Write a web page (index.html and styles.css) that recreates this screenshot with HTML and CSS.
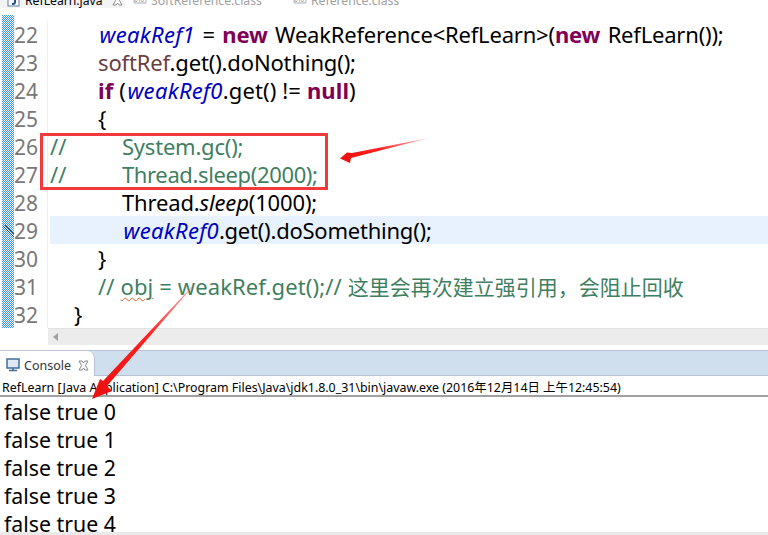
FILE: index.html
```html
<!DOCTYPE html>
<html lang="zh">
<head>
<meta charset="utf-8">
<title>RefLearn</title>
<link rel="stylesheet" href="styles.css">
</head>
<body>
<div class="tabs">
  <div class="tab active">
    <svg class="ticon" width="14" height="14" viewBox="0 0 14 14"><rect x="1" y="-4" width="11" height="16" fill="#fff" stroke="#5a7ba8"/><path d="M8 -2V8Q8 10 6 10H5" fill="none" stroke="#2d4f8f" stroke-width="2"/></svg>
    <span class="tname">RefLearn.java</span>
    <svg class="tclose" width="11" height="11" viewBox="0 0 11 11"><path d="M1 1L4 1L5.500 3L7 1L10 1L7.500 5.500L10 10L7 10L5.500 8L4 10L1 10L3.500 5.500Z" fill="#fff" stroke="#8a8a8a"/></svg>
  </div>
  <div class="tab">
    <svg class="cicon" width="14" height="12" viewBox="0 0 14 12"><path d="M1 0V8H13V0" fill="none" stroke="#a8b0bc"/><text x="1.500" y="7" class="bin">010</text></svg>
    <span class="tname dim">SoftReference.class</span>
  </div>
  <div class="tab">
    <svg class="cicon" width="14" height="12" viewBox="0 0 14 12"><path d="M1 0V8H13V0" fill="none" stroke="#a8b0bc"/><text x="1.500" y="7" class="bin">010</text></svg>
    <span class="tname dim">Reference.class</span>
  </div>
</div>
<div class="editor">
  <svg class="ruler" width="12" height="313" viewBox="0 0 12 313">
    <defs><pattern id="chk" width="2" height="2" patternUnits="userSpaceOnUse"><rect width="2" height="2" fill="#fff"/><rect width="1" height="1" fill="#3f93e4"/><rect x="1" y="1" width="1" height="1" fill="#3f93e4"/></pattern></defs>
    <rect width="12" height="313" fill="url(#chk)" shape-rendering="crispEdges"/>
  </svg>
  <div class="code">
    <div class="clipline"><span class="ln"></span><span class="src"></span></div>
    <div class="line"><span class="ln">22</span><span class="src t2 sp-w"><i class="field">weakRef1</i> = <b class="kw">new</b> WeakReference&lt;RefLearn&gt;(<b class="kw">new</b> RefLearn());</span></div>
    <div class="line"><span class="ln">23</span><span class="src t2 sp-a"><span class="soft">softRef</span>.get().doNothing();</span></div>
    <div class="line"><span class="ln">24</span><span class="src t2 sp-b"><b class="kw">if</b> (<i class="field">weakRef0</i>.get() != <b class="kw">null</b>)</span></div>
    <div class="line"><span class="ln">25</span><span class="src t2">{</span></div>
    <div class="line"><span class="ln">26</span><span class="src cm cmt sp-c"><span class="slashes">//</span>System.gc();</span></div>
    <div class="line"><span class="ln">27</span><span class="src cm cmt sp-d"><span class="slashes">//</span>Thread.sleep(2000);</span></div>
    <div class="line"><span class="ln">28</span><span class="src t3 sp-a">Thread.<i>sleep</i>(1000);</span></div>
    <div class="line current"><span class="ln">29</span><span class="src t3 sp-e"><i class="field">weakRef0</i>.get().doSomething();</span></div>
    <div class="line"><span class="ln">30</span><span class="src t2">}</span></div>
    <div class="line"><span class="ln">31</span><span class="src t2 cmt sp-f">// <span class="squiggle">obj</span> = weakRef.get();// <span class="cjk">这里会再次建立强引用，会阻止回收</span></span></div>
    <div class="line"><span class="ln">32</span><span class="src t1">}</span></div>
  </div>
</div>
<div class="hscroll"><div class="hcorner"></div><span class="harrow"></span></div>
<div class="console-tabs">
  <div class="ctab">
    <svg width="14" height="14" viewBox="0 0 14 14"><rect x="1" y="1" width="12" height="9" fill="#dfe8f3" stroke="#3f6d9c" stroke-width="1.500"/><path d="M3 12.500H11M7 10V12" stroke="#3f6d9c" stroke-width="1.500"/></svg>
    <span class="ctitle">Console</span>
    <svg width="11" height="11" viewBox="0 0 11 11"><path d="M1 1L4 1L5.500 3L7 1L10 1L7.500 5.500L10 10L7 10L5.500 8L4 10L1 10L3.500 5.500Z" fill="#fff" stroke="#8a8a8a"/></svg>
  </div>
</div>
<div class="console-head">RefLearn [Java Application] C:\Program Files\Java\jdk1.8.0_31\bin\javaw.exe (2016年12月14日 上午12:45:54)</div>
<div class="output">
  <div>false true 0</div>
  <div>false true 1</div>
  <div>false true 2</div>
  <div>false true 3</div>
  <div>false true 4</div>
</div>
<div class="footer"></div>
<div class="redbox"></div>
<svg class="arrows" width="768" height="535" viewBox="0 0 768 535">
  <defs>
    <linearGradient id="a1" x1="429" y1="138" x2="345" y2="156" gradientUnits="userSpaceOnUse"><stop offset="0" stop-color="#f66" stop-opacity="0.500"/><stop offset="0.600" stop-color="#f22"/><stop offset="1" stop-color="#ee1111"/></linearGradient>
    <linearGradient id="a2" x1="200" y1="278" x2="100" y2="390" gradientUnits="userSpaceOnUse"><stop offset="0" stop-color="#f66" stop-opacity="0.500"/><stop offset="0.500" stop-color="#f22"/><stop offset="1" stop-color="#ee1111"/></linearGradient>
  </defs>
  <path d="M3 226L14 237M5 225L14 234" stroke="#2a3f5a" stroke-width="1" fill="none"/>
  <path d="M429 138L352 153L347 152.500L340 158.500L350 163L351 158Z" fill="url(#a1)"/>
  <path d="M200 278L103 381L100 379L92 399L112 391L107 386Z" fill="url(#a2)"/>
</svg>
</body>
</html>
```
FILE: styles.css
```css
html, body { margin: 0; padding: 0; }
body {
  position: relative;
  width: 768px;
  height: 535px;
  overflow: hidden;
  background: #fff;
  font-family: "Noto Sans", "Noto Sans CJK SC", sans-serif;
  color: #000;
}
.tabs {
  height: 14px;
  display: flex;
  overflow: hidden;
  font-size: 12.200px;
  line-height: 14px;
  background: #fff;
}
.tab {
  display: flex;
  align-items: flex-start;
  gap: 4px;
  height: 14px;
  margin-top: -6px;
}
.tab.active { width: 125px; padding-left: 7px; box-sizing: border-box; background: #f4f4f4; }
.tab:nth-child(2) { width: 160px; padding-left: 8px; box-sizing: border-box; }
.tab:nth-child(3) { padding-left: 8px; }
.tname { line-height: 14px; white-space: nowrap; }
.dim { color: #a0a0a0; }
.ticon { flex: none; }
.tclose { margin: 1px 0 0 5px; flex: none; }
.cicon { margin-top: 1px; flex: none; }
.bin { font-size: 5.500px; fill: #777; }
.editor {
  height: 314px;
  display: flex;
  overflow: hidden;
}
.ruler {
  margin: 1px 0 0 2px;
  flex: none;
}
.code { flex: 1; position: relative; }
.clipline { height: 6px; }
.line {
  height: 28px;
  display: flex;
  font-size: 22px;
  line-height: 28px;
  white-space: pre;
}
.ln {
  width: 34px;
  box-sizing: border-box;
  flex: none;
  font-size: 21px;
  line-height: 30px;
  letter-spacing: 0;
  color: #787878;
  border-right: 1px solid #f0f0f0;
  margin-right: 2px;
}
.src { flex: 1; }
.t1 { padding-left: 24px; }
.t2 { padding-left: 48px; }
.t3 { padding-left: 72px; }
.cm { display: flex; }
.slashes { width: 72px; flex: none; letter-spacing: 0; }
.sp-w { letter-spacing: -0.200px; word-spacing: 2px; }
.sp-a { letter-spacing: -0.150px; }
.sp-b { letter-spacing: 0.120px; }
.sp-c { letter-spacing: -0.220px; }
.sp-d { letter-spacing: -0.370px; }
.sp-e { letter-spacing: -0.230px; }
.sp-f { letter-spacing: 0.120px; }
.cjk { font-size: 21px; letter-spacing: 0; }
.current .src { background: #e8f2fe; }
.field { color: #0000c0; letter-spacing: 0.300px; padding-left: 1.500px; }
.kw { color: #7f0055; }
.soft { color: #6a3e3e; }
.cmt { color: #3f7f5f; }
.squiggle {
  text-decoration: underline wavy #e06030 1px;
  text-underline-offset: 2px;
}
.hscroll {
  height: 17px;
  margin-left: 48px;
  background: #ececec;
  border-top: 1px solid #e2e2e2;
  box-sizing: border-box;
  display: flex;
  align-items: center;
}
.hcorner { width: 0; }
.harrow {
  width: 0;
  height: 0;
  margin-left: 5px;
  border-style: solid;
  border-width: 4px 5px 4px 0;
  border-color: transparent #a0a0a0 transparent transparent;
}
.console-tabs {
  height: 26px;
  margin-top: 5px;
  background: #d0dfee;
  border-top: 1px solid #b8c2d4;
  border-bottom: 1px solid #b8c2d4;
  box-sizing: border-box;
  display: flex;
}
.ctab {
  width: 95px;
  height: 25px;
  box-sizing: border-box;
  background: #fff;
  border-right: 1px solid #b8c2d4;
  border-top-right-radius: 7px;
  display: flex;
  align-items: center;
  padding: 3px 0 0 6px;
  gap: 4px;
  font-size: 12.500px;
  color: #333;
}
.ctitle { margin-right: 3px; }
.console-head {
  height: 21px;
  padding-left: 2px;
  box-sizing: border-box;
  font-size: 12.400px;
  line-height: 24px;
  white-space: nowrap;
  border-bottom: 2px solid #a0a0a0;
}
.output {
  height: 135px;
  padding: 1px 0 0 4px;
  box-sizing: border-box;
  overflow: hidden;
  font-size: 21.300px;
  line-height: 28px;
}
.footer { height: 3px; background: #eaeaea; }
.redbox {
  position: absolute;
  left: 40px;
  top: 133px;
  width: 288px;
  height: 57px;
  box-sizing: border-box;
  border: 3px solid #ef3b3b;
}
.arrows { position: absolute; left: 0; top: 0; pointer-events: none; }
```
